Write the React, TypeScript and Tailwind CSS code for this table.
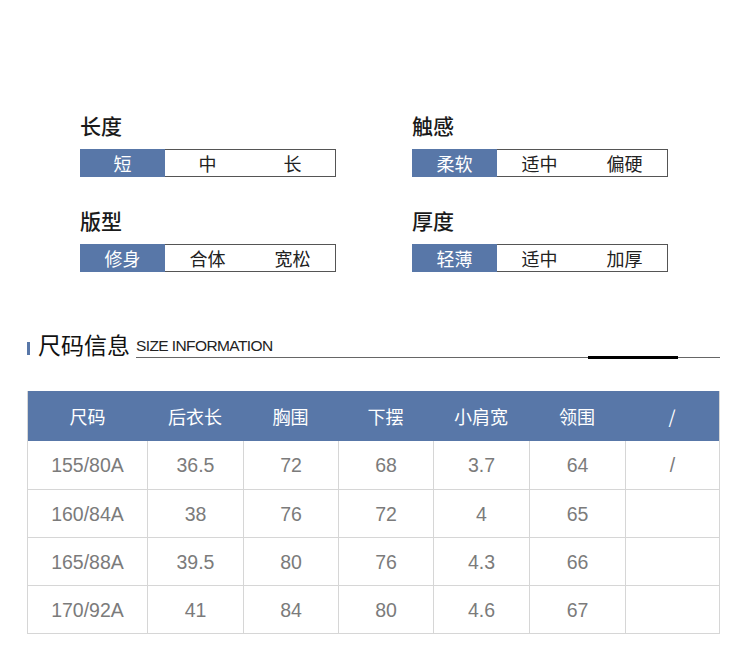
import React from "react";

const cjk = { fontFamily: '"Noto Sans CJK SC", "Noto Sans", sans-serif' };
const num = { fontFamily: '"Liberation Sans", "Noto Sans CJK SC", sans-serif' };

function Bar({ title, items }: { title: string; items: string[] }) {
  return (
    <div className="flex flex-col">
      <div className="text-[21px] leading-[24px] font-medium text-[#1a1a1a]" style={cjk}>
        {title}
      </div>
      <div className="mt-[12px] flex h-[28px] w-[256px]">
        <div className="flex w-[85px] items-center justify-center bg-[#5877a8] text-[18px] text-white" style={cjk}>
          {items[0]}
        </div>
        <div className="flex flex-1 border border-l-0 border-[#555]">
          <div className="flex flex-1 items-center justify-center text-[18px] text-[#222]" style={cjk}>
            {items[1]}
          </div>
          <div className="flex flex-1 items-center justify-center text-[18px] text-[#222]" style={cjk}>
            {items[2]}
          </div>
        </div>
      </div>
    </div>
  );
}

const headers = ["尺码", "后衣长", "胸围", "下摆", "小肩宽", "领围", "/"];
const rows = [
  ["155/80A", "36.5", "72", "68", "3.7", "64", "/"],
  ["160/84A", "38", "76", "72", "4", "65", ""],
  ["165/88A", "39.5", "80", "76", "4.3", "66", ""],
  ["170/92A", "41", "84", "80", "4.6", "67", ""],
];

export default function App() {
  return (
    <div className="relative h-[667px] w-[750px] overflow-hidden bg-white">
      <div className="grid grid-cols-[255px_256px] gap-x-[77px] gap-y-[31px] pl-[80px] pt-[113px]">
        <Bar title="长度" items={["短", "中", "长"]} />
        <Bar title="触感" items={["柔软", "适中", "偏硬"]} />
        <Bar title="版型" items={["修身", "合体", "宽松"]} />
        <Bar title="厚度" items={["轻薄", "适中", "加厚"]} />
      </div>

      <div className="mt-[58px] flex items-end pl-[27px]">
        <div className="mb-[3px] h-[13px] w-[3px] bg-[#5877a8]" />
        <div className="ml-[8px] text-[23px] leading-[28px] text-[#111]" style={cjk}>
          尺码信息
        </div>
        <div className="relative ml-[6px] w-[584px] border-b border-[#666] pb-[2px]">
          <div className="text-[15.5px] leading-[18px] tracking-[-0.6px] text-[#222]" style={num}>
            SIZE INFORMATION
          </div>
          <div className="absolute bottom-[-2px] left-[452px] h-[3px] w-[90px] bg-black" />
        </div>
      </div>

      <div className="ml-[27px] mt-[33px] w-[693px] border border-[#d6d6d6] border-t-0">
        <div className="grid h-[50px] grid-cols-[119px_96px_95px_95px_96px_96px_94px] bg-[#5877a8]">
          {headers.map((h, i) => (
            <div key={i} className="flex items-center justify-center text-[18px] text-white" style={cjk}>
              {h}
            </div>
          ))}
        </div>
        {rows.map((r, ri) => (
          <div
            key={ri}
            className={`grid h-[48px] grid-cols-[119px_96px_95px_95px_96px_96px_94px] ${ri > 0 ? "border-t border-[#d6d6d6]" : ""}`}
          >
            {r.map((c, ci) => (
              <div
                key={ci}
                className={`flex items-center justify-center pt-[2px] text-[19.5px] font-light text-[#7b7b7b] ${ci > 0 ? "border-l border-[#d6d6d6]" : ""}`}
                style={num}
              >
                {c}
              </div>
            ))}
          </div>
        ))}
      </div>
    </div>
  );
}
